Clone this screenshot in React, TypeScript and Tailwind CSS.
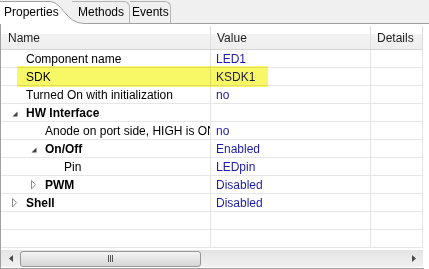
import React from 'react';

type Row = {
  name: string;
  value: string;
  depth: number;
  bold?: boolean;
  toggle?: 'open' | 'closed';
};

const rows: Row[] = [
  { name: 'Component name', value: 'LED1', depth: 0 },
  { name: 'SDK', value: 'KSDK1', depth: 0 },
  { name: 'Turned On with initialization', value: 'no', depth: 0 },
  { name: 'HW Interface', value: '', depth: 0, bold: true, toggle: 'open' },
  { name: 'Anode on port side, HIGH is ON', value: 'no', depth: 1 },
  { name: 'On/Off', value: 'Enabled', depth: 1, bold: true, toggle: 'open' },
  { name: 'Pin', value: 'LEDpin', depth: 2 },
  { name: 'PWM', value: 'Disabled', depth: 1, bold: true, toggle: 'closed' },
  { name: 'Shell', value: 'Disabled', depth: 0, bold: true, toggle: 'closed' },
  { name: '', value: '', depth: 0 },
  { name: '', value: '', depth: 0 },
];

// indent per tree level, in px
const indents = ['pl-[11px]', 'pl-[30px]', 'pl-[49px]'];

function Toggle({ kind }: { kind?: 'open' | 'closed' }) {
  return (
    <span className="flex w-[14px] shrink-0 items-center">
      {kind === 'open' && (
        <svg width="6" height="6" viewBox="0 0 6 6" className="mt-[2px]">
          <path d="M5.5 0.5 L5.5 5.5 L0.5 5.5 Z" fill="#404040" />
        </svg>
      )}
      {kind === 'closed' && (
        <svg width="6" height="10" viewBox="0 0 6 10">
          <path d="M0.5 0.5 L4.5 4.75 L0.5 9 Z" fill="white" stroke="#8c8c8c" />
        </svg>
      )}
    </span>
  );
}

export default function App() {
  return (
    <div className="relative h-[269px] w-[429px] overflow-hidden bg-white font-['Liberation_Sans',Arial,sans-serif] text-[12px] text-black">
      {/* Tabs */}
      <div className="flex h-[24px] items-end border-b border-[#a0a0a0] bg-[#f0f0f0]">
        <div className="relative z-10 -mb-px h-[24px] w-[84px] shrink-0">
          <svg width="84" height="24" viewBox="0 0 84 24" className="absolute inset-0">
            <path d="M0 24 V1 H50 C62 1 66 23 84 23 V24 Z" fill="white" />
            <path d="M0 1.5 H50 C62 1.5 66 23.5 84 23.5" fill="none" stroke="#a0a0a0" />
          </svg>
          <span className="relative block pl-[4px] pt-[5px] leading-[15px]">Properties</span>
        </div>
        <div className="-ml-[12px] h-[22px] w-[58px] shrink-0 rounded-tr-[6px] border-r border-t border-[#b4b4b4] pl-[6px] pt-[3px] leading-[15px]">
          Methods
        </div>
        <div className="h-[22px] w-[41px] shrink-0 rounded-tr-[6px] border-r border-t border-[#b4b4b4] pl-[2px] pt-[3px] leading-[15px]">
          Events
        </div>
      </div>

      {/* Table panel */}
      <div className="flex h-[245px] w-[424px] flex-col border-b border-l border-[#a0a0a0]">
        {/* Header */}
        <div className="flex h-[26px] w-[422px] shrink-0 border-b border-[#d5d5d5] bg-[linear-gradient(to_bottom,#ffffff_0%,#ffffff_38%,#f3f3f4_42%,#eeeeef_100%)] pt-[2px] text-[#1e1e1e]">
          <div className="flex w-[210px] items-center border-r border-[#dcdcdc] pl-[7px]">Name</div>
          <div className="flex w-[160px] items-center border-r border-[#dcdcdc] pl-[6px]">Value</div>
          <div className="flex w-[52px] items-center border-r border-[#dcdcdc] pl-[6px]">Details</div>
        </div>

        {/* Rows */}
        <div className="flex w-[422px] flex-col">
          {rows.map((r, i) => (
            <div key={i} className="flex h-[18px] border-b border-[#e6e6e6]">
              <div className={`flex w-[210px] items-center overflow-hidden whitespace-nowrap border-r border-[#e3e3e3] ${indents[r.depth]}`}>
                <Toggle kind={r.toggle} />
                <span className={r.bold ? 'font-bold' : ''}>{r.name}</span>
              </div>
              <div className="flex w-[160px] items-center whitespace-nowrap border-r border-[#e3e3e3] pl-[5px] text-[#1d1da6]">
                {r.value}
              </div>
              <div className="w-[52px] border-r border-[#e3e3e3]" />
            </div>
          ))}
        </div>

        {/* Horizontal scrollbar */}
        <div className="mt-[2px] flex h-[17px] w-[422px] items-center bg-[linear-gradient(to_bottom,#e4e4e4,#f1f1f1)]">
          <div className="flex w-[19px] justify-center">
            <svg width="4" height="7" viewBox="0 0 4 7">
              <path d="M4 0 L0 3.5 L4 7 Z" fill="#4a4a4a" />
            </svg>
          </div>
          <div className="flex h-[16px] w-[181px] items-center justify-center rounded-[3px] border border-[#989898] bg-[linear-gradient(to_bottom,#f4f4f4,#e6e6e6_50%,#d6d6d6)]">
            <div className="flex gap-[1px]">
              <span className="h-[7px] w-[1px] bg-[#555]" />
              <span className="h-[7px] w-[1px] bg-[#555]" />
              <span className="h-[7px] w-[1px] bg-[#555]" />
            </div>
          </div>
          <div className="flex-1" />
          <div className="flex w-[19px] justify-center">
            <svg width="4" height="7" viewBox="0 0 4 7">
              <path d="M0 0 L4 3.5 L0 7 Z" fill="#4a4a4a" />
            </svg>
          </div>
        </div>
      </div>

      {/* Yellow marker highlight over SDK row */}
      <div className="pointer-events-none absolute left-[17px] top-[66px] h-[21px] w-[251px] bg-[#f8f766] mix-blend-multiply blur-[0.6px]" />
    </div>
  );
}
